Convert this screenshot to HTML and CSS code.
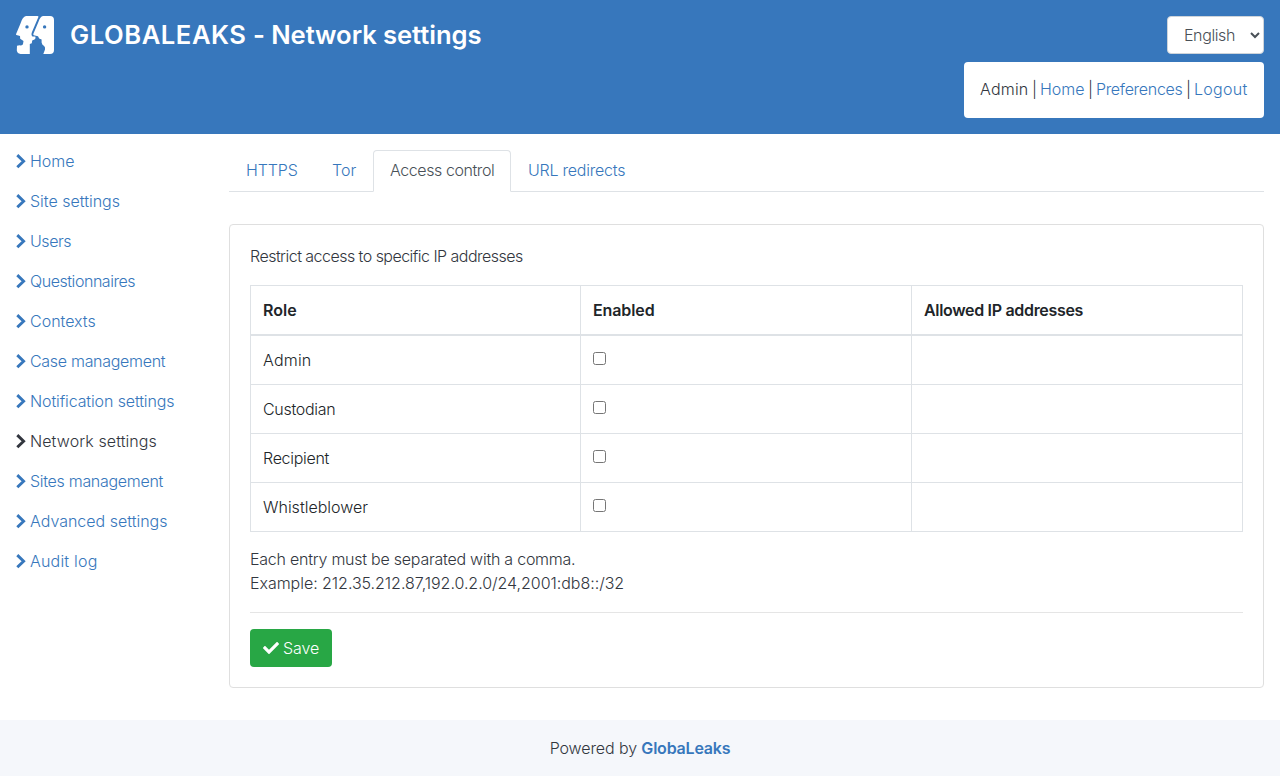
FILE: index.html
```
<!DOCTYPE html>
<html lang="en">
<head>
<meta charset="utf-8">
<title>GLOBALEAKS - Network settings</title>
<link rel="stylesheet" href="styles.css">
</head>
<body>
<svg class="symbols" aria-hidden="true">
  <symbol id="chevron" viewBox="0 0 10 16"><path d="M1.300 2.100 7.600 8.200 1.300 14.300" fill="none" stroke="currentColor" stroke-width="2.900"/></symbol>
  <symbol id="check" viewBox="0 0 512 512"><path fill="currentColor" d="M173.900 439.400 7.500 273c-10-10-10-26.200 0-36.200l36.200-36.200c10-10 26.200-10 36.200 0L192 312.700 432.100 72.600c10-10 26.200-10 36.200 0l36.200 36.200c10 10 10 26.200 0 36.200L210.100 439.400c-10 10-26.200 10-36.200 0z"/></symbol>
</svg>
<header class="header">
  <div class="brand">
    <svg class="logo" viewBox="0 0 38 38"><path fill="#fff" fill-rule="evenodd" d="M10 0H21.500Q22.800 0 22.300 1.200L16 16Q14.800 19 16.400 20.600H19.300Q20 22.800 18.500 23.600L16.200 24.500 15.800 27.200 13.800 28V38H4.500Q1.300 37.500.8 34.500L1 29.800 3.500 29.300Q6.800 29.800 7 28L7.500 25 4.200 22.700 4 20 .4 19Q-.2 18.700.2 17.800L4.500 7.500Q6.500.5 10 0ZM11 9.200a1.700 1.700 0 1 0 0 3.400 1.700 1.700 0 0 0 0-3.400ZM27 0H34Q38 0 38 4V34Q38 38 34 38H27.300L29 33.500V31.500Q28.500 29.800 26.500 28.700L25.600 26.500V23.500L23.200 22.500 22 20.200 17.700 19.300Q17 18.700 17.500 17.400L22.400 6Q24.200.4 27 0ZM28.600 9.200a1.700 1.700 0 1 0 0 3.400 1.700 1.700 0 0 0 0-3.400Z"/></svg>
    <h1 class="title"><span class="title-name">GLOBALEAKS</span> - Network settings</h1>
  </div>
  <div class="tools">
    <select class="language"><option>English</option></select>
    <div class="session"><span class="user">Admin</span> | <a href="#">Home</a> | <a href="#" class="preferences">Preferences</a> | <a href="#" class="logout">Logout</a></div>
  </div>
</header>
<main class="main">
  <nav class="sidebar">
    <a href="#"><svg><use href="#chevron"/></svg><span>Home</span></a>
    <a href="#"><svg><use href="#chevron"/></svg><span>Site settings</span></a>
    <a href="#" class="tight"><svg><use href="#chevron"/></svg><span>Users</span></a>
    <a href="#" class="tight"><svg><use href="#chevron"/></svg><span>Questionnaires</span></a>
    <a href="#"><svg><use href="#chevron"/></svg><span>Contexts</span></a>
    <a href="#" class="snug"><svg><use href="#chevron"/></svg><span>Case management</span></a>
    <a href="#" class="close"><svg><use href="#chevron"/></svg><span>Notification settings</span></a>
    <a href="#" class="current"><svg><use href="#chevron"/></svg><span>Network settings</span></a>
    <a href="#" class="snug"><svg><use href="#chevron"/></svg><span>Sites management</span></a>
    <a href="#"><svg><use href="#chevron"/></svg><span>Advanced settings</span></a>
    <a href="#" class="loose"><svg><use href="#chevron"/></svg><span>Audit log</span></a>
  </nav>
  <section class="content">
    <nav class="tabs">
      <a href="#" class="tab tab-https">HTTPS</a>
      <a href="#" class="tab tab-tor">Tor</a>
      <a href="#" class="tab tab-access active">Access control</a>
      <a href="#" class="tab tab-url">URL redirects</a>
    </nav>
    <div class="card">
      <p class="intro">Restrict access to specific IP addresses</p>
      <table class="access">
        <thead><tr><th class="role">Role</th><th class="enabled">Enabled</th><th class="allowed">Allowed IP addresses</th></tr></thead>
        <tbody>
          <tr><td class="loose">Admin</td><td><input type="checkbox"></td><td></td></tr>
          <tr><td class="snug">Custodian</td><td><input type="checkbox"></td><td></td></tr>
          <tr><td class="snug">Recipient</td><td><input type="checkbox"></td><td></td></tr>
          <tr><td>Whistleblower</td><td><input type="checkbox"></td><td></td></tr>
        </tbody>
      </table>
      <p class="help"><span class="help-entry">Each entry must be separated with a comma.</span><br><span class="help-example">Example: 212.35.212.87,192.0.2.0/24,2001:db8::/32</span></p>
      <hr class="rule">
      <button class="save"><svg><use href="#check"/></svg><span>Save</span></button>
    </div>
  </section>
</main>
<footer class="footer"><span>Powered by <a href="#">GlobaLeaks</a></span></footer>
</body>
</html>
```
FILE: styles.css
```
* { box-sizing: border-box; }
body {
  margin: 0;
  min-height: 776px;
  display: flex;
  flex-direction: column;
  background: #fff;
  color: #32363e;
  font: 300 16px/24px Inter, "Liberation Sans", sans-serif;
}
a { color: #3777bc; text-decoration: none; }
p { margin: 0; }
.symbols { display: none; }
.tight { letter-spacing: -0.45px; }
.snug { letter-spacing: -0.3px; }
.close { letter-spacing: -0.12px; }
.loose { letter-spacing: 0.2px; }
.header {
  height: 134px;
  padding: 16px;
  display: flex;
  justify-content: space-between;
  background: #3777bc;
}
.brand { display: flex; gap: 16px; height: 38px; align-items: center; }
.logo { width: 38px; height: 38px; }
.title { margin: 0; color: #fff; font-size: 25.6px; line-height: 38px; font-weight: 600; letter-spacing: -0.06px; white-space: nowrap; }
.title-name { letter-spacing: 0.55px; }
.tools { display: flex; flex-direction: column; align-items: flex-end; gap: 8px; }
.language {
  width: 97px;
  height: 38px;
  padding: 6px 0 6px 12px;
  border: 1px solid #ced4da;
  border-radius: 4px;
  background: #fff;
  color: #495057;
  font: inherit;
  letter-spacing: -0.4px;
}
.session {
  width: 300px;
  height: 56px;
  padding: 15px 16px 17px;
  border-radius: 4px;
  background: #fff;
  letter-spacing: -0.85px;
  white-space: nowrap;
}
.session a { letter-spacing: 0; }
.session .user { letter-spacing: 0.2px; }
.session .preferences { letter-spacing: -0.3px; }
.session .logout { letter-spacing: 0.3px; }
.main { display: flex; height: 586px; padding: 0 16px; }
.sidebar { width: 213px; padding-top: 7px; }
.sidebar a { display: flex; align-items: center; gap: 4px; height: 40px; white-space: nowrap; }
.sidebar svg { width: 10px; height: 16px; }
.sidebar .current { color: #32363e; letter-spacing: 0.1px; }
.content { flex: 1; padding-top: 16px; }
.tabs { display: flex; height: 42px; border-bottom: 1px solid #dee2e6; }
.tab {
  height: 42px;
  padding: 7px 16px 9px;
  border: 1px solid transparent;
  border-radius: 4px 4px 0 0;
  white-space: nowrap;
}
.tab-https { width: 86px; letter-spacing: -0.15px; }
.tab-tor { width: 58px; }
.tab-access { width: 138px; letter-spacing: -0.42px; }
.tab-url { letter-spacing: -0.23px; }
.active { color: #495057; background: #fff; border-color: #dee2e6 #dee2e6 #fff; }
.card {
  height: 464px;
  margin-top: 32px;
  padding: 19px 20px 20px;
  border: 1px solid #dfdfdf;
  border-radius: 4px;
}
.intro { letter-spacing: -0.53px; }
.access {
  width: 100%;
  margin: 17px 0 15px;
  border-collapse: collapse;
  table-layout: fixed;
  color: #212529;
}
.access th, .access td { height: 49px; padding: 12px; border: 1px solid #dee2e6; text-align: left; vertical-align: top; }
.access th { font-weight: 600; border-bottom-width: 2px; }
.access .role { width: 330px; }
.access .enabled { width: 331px; letter-spacing: -0.1px; }
.access .allowed { letter-spacing: -0.32px; }
.access input { display: block; width: 13px; height: 13px; margin: 4px 0 0; }
.help-entry { letter-spacing: -0.24px; }
.help-example { letter-spacing: -0.04px; }
.rule { height: 1px; margin: 17px 0 16px; border: 0; background: #e5e5e5; }
.save {
  display: flex;
  align-items: center;
  gap: 4px;
  width: 82px;
  height: 38px;
  padding: 0 13px;
  border: 0;
  border-radius: 4px;
  background: #28a745;
  color: #fff;
  font: inherit;
  letter-spacing: -0.1px;
}
.save svg { width: 16px; height: 16px; flex: none; }
.footer { height: 56px; padding: 16px; background: #f5f7fb; text-align: center; letter-spacing: -0.1px; }
.footer a { font-weight: 600; letter-spacing: -0.2px; }
```
